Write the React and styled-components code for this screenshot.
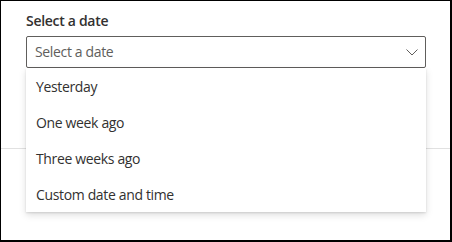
import React from "react";
import styled, { createGlobalStyle } from "styled-components";

const GlobalStyle = createGlobalStyle`
  html, body {
    margin: 0;
    padding: 0;
    background: #ffffff;
  }
  body {
    font-family: "Open Sans", "Noto Sans", sans-serif;
    -webkit-font-smoothing: antialiased;
  }
`;

const options = ["Yesterday", "One week ago", "Three weeks ago", "Custom date and time"];

function ChevronDown() {
  return (
    <svg width="12" height="7" viewBox="0 0 12 7" fill="none">
      <path d="M0.5 0.5L6 6L11.5 0.5" stroke="#605e5c" strokeWidth="1" />
    </svg>
  );
}

export default function App() {
  return (
    <>
      <GlobalStyle />
      <Frame>
        <Panel>
          <Label>Select a date</Label>
          <Field>
            <Select>
              <Placeholder>Select a date</Placeholder>
              <Caret>
                <ChevronDown />
              </Caret>
            </Select>
            <Menu>
              {options.map((option) => (
                <Option key={option}>{option}</Option>
              ))}
            </Menu>
          </Field>
        </Panel>
      </Frame>
    </>
  );
}

const Frame = styled.div`
  box-sizing: border-box;
  width: 452px;
  height: 242px;
  border-top: 1px solid #000;
  border-left: 1px solid #000;
  border-right: 2px solid #000;
  border-bottom: 2px solid #000;
  overflow: hidden;
`;

const Panel = styled.div`
  box-sizing: border-box;
  height: 148px;
  padding: 5px 24px 0 25px;
  border-bottom: 1px solid #e1e1e1;
`;

const Label = styled.div`
  font-size: 14px;
  font-weight: 600;
  line-height: 20px;
  letter-spacing: -0.3px;
  color: #323130;
  padding: 5px 0;
`;

const Field = styled.div`
  position: relative;
`;

const Select = styled.div`
  box-sizing: border-box;
  height: 32px;
  display: flex;
  align-items: center;
  justify-content: space-between;
  padding: 0 3px 0 8px;
  border: 1px solid #605e5c;
  border-radius: 2px;
`;

const Placeholder = styled.span`
  font-size: 14px;
  line-height: 20px;
  letter-spacing: -0.35px;
  color: #605e5c;
`;

const Caret = styled.span`
  display: flex;
  align-items: center;
  width: 20px;
  justify-content: center;
`;

const Menu = styled.ul`
  position: absolute;
  top: 32px;
  left: 0;
  right: 0;
  margin: 0;
  padding: 0;
  list-style: none;
  background: #ffffff;
  box-shadow: 0 3.2px 7.2px rgba(0, 0, 0, 0.132), 0 0.6px 1.8px rgba(0, 0, 0, 0.108);
  z-index: 2;
`;

const Option = styled.li`
  box-sizing: border-box;
  height: 36px;
  display: flex;
  align-items: center;
  padding: 0 10px;
  font-size: 14px;
  letter-spacing: -0.35px;
  color: #323130;
`;
